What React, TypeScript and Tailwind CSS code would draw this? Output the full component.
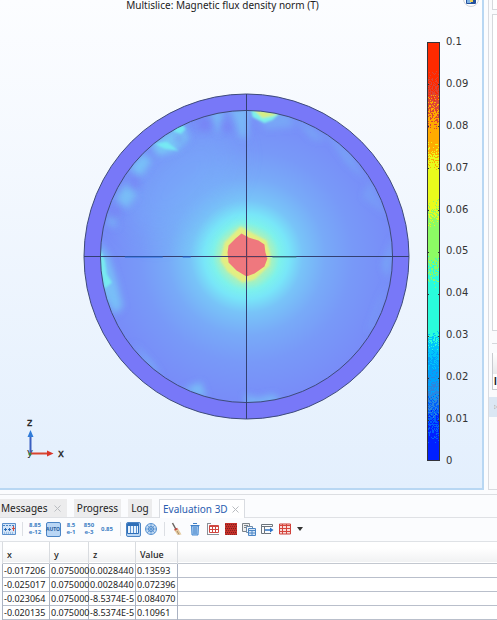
import React from 'react';
import clsx from 'clsx';

const LABELS = ['0.1', '0.09', '0.08', '0.07', '0.06', '0.05', '0.04', '0.03', '0.02', '0.01', '0'];

const ROWS = [
  ['-0.017206', '0.075000', '0.0028440', '0.13593'],
  ['-0.025017', '0.075000', '0.0028440', '0.072396'],
  ['-0.023064', '0.075000', '-8.5374E-5', '0.084070'],
  ['-0.020135', '0.075000', '-8.5374E-5', '0.10961'],
];

// each band dithers into the colour above it between y0 and y1
const BANDS = [
  { y0: 0, y1: 0, color: '#ff2a00' },
  { y0: 26, y1: 62, color: '#dd4534' },
  { y0: 50, y1: 92, color: '#ffab00' },
  { y0: 98, y1: 128, color: '#e9fb1c' },
  { y0: 156, y1: 188, color: '#8cfb64' },
  { y0: 212, y1: 246, color: '#29fcdb' },
  { y0: 286, y1: 308, color: '#00c4fb' },
  { y0: 304, y1: 330, color: '#00a2fb' },
  { y0: 326, y1: 362, color: '#2a86e0' },
  { y0: 350, y1: 376, color: '#0060fb' },
  { y0: 366, y1: 402, color: '#0020ff' },
];

const noise = (x: number, y: number) => {
  const n = Math.sin(x * 12.9898 + y * 78.233) * 43758.5453;
  return n - Math.floor(n);
};

const dither = (y0: number, y1: number) => {
  let d = '';
  for (let y = y0; y < y1; y++) {
    for (let x = 1; x < 12; x++) {
      if (noise(x, y) < (y - y0) / (y1 - y0)) d += `M${x} ${y}h1v1h-1z`;
    }
  }
  return d;
};

const ColorBar = () => {
  return (
    <svg className="my-[5px] h-[419px] w-[13px]" viewBox="0 0 13 419" shapeRendering="crispEdges">
      {BANDS.map(({ y0, y1, color }) => (
        <g key={color} fill={color}>
          <rect x="0" y={y1} width="13" height={419 - y1} />
          <path d={dither(y0, y1)} />
        </g>
      ))}
      <rect x="0.5" y="0.5" width="12" height="418" fill="none" stroke="#33333a" />
      {LABELS.slice(1, -1).map((label, i) => (
        <path key={label} d={`M0 ${(i + 1) * 42}.5h2M11 ${(i + 1) * 42}.5h2`} stroke="#33333a" />
      ))}
    </svg>
  );
};

const FluxDisc = () => {
  return (
    <svg className="mt-[81px] w-full" viewBox="-164 -164 328 328">
      <defs>
        <radialGradient id="field" gradientUnits="userSpaceOnUse" cx="0" cy="0" r="152" fx="0" fy="0">
          <stop offset="0" stopColor="#9cf3cf" />
          <stop offset="0.17" stopColor="#97f2cf" />
          <stop offset="0.22" stopColor="#7df2ec" />
          <stop offset="0.28" stopColor="#78e6f8" />
          <stop offset="0.37" stopColor="#78c4f8" />
          <stop offset="0.52" stopColor="#78aaf8" />
          <stop offset="0.7" stopColor="#7899f8" />
          <stop offset="1" stopColor="#788af8" />
        </radialGradient>
        <clipPath id="inner"><circle r="146.5" /></clipPath>
        <filter id="soft" x="-50%" y="-50%" width="200%" height="200%"><feGaussianBlur stdDeviation="4" /></filter>
        <filter id="wide" x="-50%" y="-50%" width="200%" height="200%"><feGaussianBlur stdDeviation="14" /></filter>
        <filter id="fine" x="-30%" y="-30%" width="160%" height="160%"><feGaussianBlur stdDeviation="1.2" /></filter>
      </defs>
      <circle r="163" fill="#7878f8" />
      <g clipPath="url(#inner)">
        <circle r="147" fill="url(#field)" />
        <ellipse cx="-66" cy="-76" rx="65" ry="38" transform="rotate(-45 -66 -76)" fill="#78b2fa" opacity="0.4" filter="url(#wide)" />
        <g fill="#79d4f6" filter="url(#soft)">
          <path d="M-96-112L-64-136L-58-118L-70-107L-88-101Z" opacity=".8" />
          <path d="M-118-88L-104-104L-95-96L-106-80Z" opacity=".7" />
          <path d="M-132-58L-120-74L-110-62L-120-48Z" opacity=".65" />
          <path d="M-142-35L-132-44L-130-28Z" opacity=".5" />
          <path d="M-38-146L-22-148L-28-122Z" opacity=".6" />
          <path d="M-18-150L4-150L0-118L-6-120Z" opacity=".6" />
          <path d="M2-150L42-146L48-130L20-128Z" opacity=".35" />
          <path d="M44-142L66-130L80-116L66-118Z" opacity=".3" />
          <path d="M74-132L104-104L120-76L100-94Z" opacity=".3" />
          <path d="M124-78L142-40L134-46L116-60Z" opacity=".2" />
          <path d="M-148-16L-138 0L-130 26L-124 50L-132 58L-150 30Z" opacity=".7" />
          <path d="M-114 86L-94 108L-84 124L-100 108Z" opacity=".6" />
          <path d="M-64 134L-46 126L-40 142Z" opacity=".7" />
          <path d="M-2 138L10 142L28 138L36 148L0 150Z" opacity=".6" />
          <path d="M148-22L142 24L136 8Z" opacity=".35" />
          <path d="M144 20L128 70L120 78L132 44Z" opacity=".2" />
        </g>
        <g fill="#7880f4" filter="url(#soft)" opacity=".7">
          <circle cx="-68" cy="-118" r="4" />
          <circle cx="-112" cy="-74" r="5" />
          <circle cx="-132" cy="-44" r="5" />
          <circle cx="-42" cy="-132" r="7" />
          <circle cx="-20" cy="-130" r="5" />
        </g>
        <g filter="url(#fine)">
          <path d="M-92-113L-80-115L-68-106L-82-108ZM-66-134L-61-128L-66-123L-74-126Z" fill="#76eef2" opacity=".85" />
          <path d="M-147-8L-142 4L-140 18L-135 26L-142 32L-148 10Z" fill="#78eaf0" />
          <path d="M4-150L34-144L26-137L18-134L6-140Z" fill="#7df0ea" />
          <path d="M6-148L32-143L26-141L16-139Z" fill="#d6ec84" />
        </g>
        <path d="M-6-32L4-27L20-20L27-8L26 12L10 27L-8 28L-24 14L-30 2L-25-16Z" fill="#a9f0bd" filter="url(#soft)" />
        <path d="M-6-30L3-25L20-16L24-2L23 9L8 23L-4 26L-19 15L-26 4L-22-14Z" fill="#e4ee82" filter="url(#fine)" />
        <path d="M-5-23L2-19L12-16L18-12L19-4L21 2L18 10L8 17L0 20L-10 14L-18 6L-19-4L-18-11L-11-18Z" fill="#ef787e" />
      </g>
      <g fill="none" stroke="#3d4a78">
        <circle r="163" />
        <circle r="146.5" />
        <path d="M.5-163V163M-163 0.5H163" strokeWidth="1" stroke="#333f72" shapeRendering="crispEdges" />
        <path d="M-18 .5H20M.5-20V20" stroke="#b9352c" strokeDasharray="1 1" />
        <path d="M-122 .5H-84M-64 .5H-56" stroke="#2468d8" />
        <path d="M26 .5H50" stroke="#377f86" />
      </g>
    </svg>
  );
};

const AxisTriad = () => {
  return (
    <svg className="mb-[26px] ml-[24px] h-[46px] w-[46px] shrink-0" viewBox="0 0 46 46" fontFamily="DejaVu Sans, sans-serif" fontSize="10" fill="#222">
      <text x="3" y="10" stroke="#222" strokeWidth=".3">z</text>
      <text x="3" y="40">y</text>
      <path d="M6.5 18V37" stroke="#3a5fc0" strokeWidth="2" />
      <path d="M6.500 14L9.500 21H3.500Z" fill="#2f7bd8" />
      <path d="M6 37.500H24" stroke="#d8452f" strokeWidth="2" />
      <path d="M29.500 37.500L23 34.500V40.500Z" fill="#d8352a" />
      <circle cx="6" cy="38" r="1.500" fill="#368a3c" />
      <text x="34" y="41" stroke="#222" strokeWidth=".3">x</text>
    </svg>
  );
};

const Tool = ({ label, active, children }: { label: string; active?: boolean; children: React.ReactNode }) => {
  return (
    <button aria-label={label} className="flex h-[18px] w-[18px] shrink-0 items-center justify-center">
      <span className={clsx('flex h-[15px] w-[15px] items-center justify-center', active && 'rounded-xs border border-[#4b84c4] bg-[#b9d6f5]')}>
        {children}
      </span>
    </button>
  );
};

const NumberFormat = ({ lines }: { lines: string[] }) => {
  return (
    <span className="text-[6px] leading-[7px] font-bold whitespace-nowrap text-[#3d7fc4]">
      {lines.map((line) => <span key={line} className="block">{line}</span>)}
    </span>
  );
};

const Glyph = ({ children }: { children: React.ReactNode }) => {
  return <svg className="h-[14px] w-[14px] shrink-0" viewBox="0 0 14 14" fill="none">{children}</svg>;
};

const Separator = () => <div className="mx-[3px] h-[14px] w-[2px] shrink-0 border-r border-[#dcdfe4]" />;

const Toolbar = () => {
  return (
    <div className="flex h-[24px] items-center border-b border-[#dfe2e6] pb-px">
      <Tool label="Full precision">
        <Glyph>
          <path d="M.5 1.500H13.500V12.500H.5Z" fill="#d3e4f7" stroke="#5b8fcb" />
          <path d="M1 3.500H13" stroke="#4683c6" strokeDasharray="2 1" />
          <path d="M3.500 6V9M7.500 6V9M2 7.500H5M6 7.500H9" stroke="#2869b5" />
          <path d="M11.500 4V9M10 6.500H13" stroke="#d24a3e" />
          <path d="M2 11H12" stroke="#5f95cf" strokeDasharray="1 1" />
        </Glyph>
      </Tool>
      <Separator />
      <Tool label="Full notation"><NumberFormat lines={['8.85', 'e-12']} /></Tool>
      <Tool label="Automatic notation" active>
        <span className="text-[5px] leading-[6px] font-bold text-[#285c9c]">AUTO</span>
      </Tool>
      <Tool label="Scientific notation"><NumberFormat lines={['8.5', 'e-1']} /></Tool>
      <Tool label="Engineering notation"><NumberFormat lines={['850', 'e-3']} /></Tool>
      <Tool label="Decimal notation"><NumberFormat lines={['0.85']} /></Tool>
      <Separator />
      <Tool label="Table" active>
        <Glyph>
          <path d="M1.500 1.500H12.500V11.500H1.500Z" fill="#e9f3fd" stroke="#2f6fb8" />
          <path d="M1 3H13" stroke="#2f6fb8" strokeWidth="2" />
          <path d="M4.500 4V11M7.500 4V11M10.500 4V11" stroke="#5d94d2" />
        </Glyph>
      </Tool>
      <Tool label="Polar">
        <Glyph>
          <circle cx="7" cy="7" r="5.500" fill="#c5dcf4" stroke="#5b94d2" />
          <circle cx="7" cy="7" r="2.500" stroke="#4480c4" />
          <path d="M7 1V13M1 7H13M3 3L11 11M11 3L3 11" stroke="#5b94d2" strokeWidth=".8" />
        </Glyph>
      </Tool>
      <Separator />
      <Tool label="Clear table">
        <Glyph>
          <path d="M2.500 1L6 7.500" stroke="#6a6460" strokeWidth="1.500" />
          <path d="M4.500 8.500L8 6.500L11.500 12.500L7.500 13Z" fill="#e4cba0" />
          <path d="M4.500 8L7.500 6.500" stroke="#c54740" strokeWidth="1.500" />
          <path d="M7 9L9 12.500" stroke="#a98a6a" />
        </Glyph>
      </Tool>
      <Tool label="Delete table">
        <Glyph>
          <path d="M3.500 4H10.500L10 13H4Z" fill="#a6cbf1" stroke="#4a8ad0" />
          <path d="M2.500 3.500H11.500M5 1.500H9M6 5V12M8 5V12" stroke="#3f7fc6" />
        </Glyph>
      </Tool>
      <Tool label="Table graph">
        <Glyph>
          <path d="M1.500 1V13M1 12.500H13" stroke="#8a9098" />
          <path d="M3.500 3.500H12.500V10.500H3.500Z" fill="#fff" stroke="#cf4640" />
          <path d="M3 4.500H13M3 7.500H13M6.500 4V11M9.500 4V11" stroke="#cf4640" />
          <path d="M1 1.500H5" stroke="#8a9098" />
        </Glyph>
      </Tool>
      <Tool label="Table surface">
        <Glyph>
          <path d="M1 1H13V13H1Z" fill="#c62f29" />
          <path d="M1 2.500H13M1 6.500H13M1 10.500H13" stroke="#7a2220" strokeDasharray="1 1" />
          <path d="M2 4.500H13M2 8.500H13M2 12.500H13" stroke="#8a2622" strokeDasharray="1 1" />
        </Glyph>
      </Tool>
      <Tool label="Copy table">
        <Glyph>
          <path d="M.5 1.500H7.500V9.500H.5Z" fill="#eee" stroke="#7b8288" />
          <path d="M2 3.500H6M2 5.500H6" stroke="#7b8288" />
          <path d="M4.500 4.500H10.500V10.500H4.500Z" fill="#f4f8fc" stroke="#6f8aa8" />
          <path d="M6.500 6.500H13.500V13.500H6.500Z" fill="#d7e7f8" stroke="#4a85c5" />
          <path d="M7 8.500H13M7 11H13M10 8V13" stroke="#4a85c5" />
        </Glyph>
      </Tool>
      <Tool label="Export">
        <Glyph>
          <path d="M1.500 2.500H12.500V4.500H1.500ZM1.500 4.500H4.500V11.500H1.500ZM4.500 11.500H11" stroke="#6c747c" />
          <path d="M5 8H11" stroke="#2b74c8" strokeWidth="1.500" />
          <path d="M10 5.500L13.500 8L10 10.500Z" fill="#2b74c8" />
        </Glyph>
      </Tool>
      <Tool label="Table settings">
        <Glyph>
          <path d="M1.500 2H12.500V12H1.500Z" fill="#f8dcd9" stroke="#cf403a" />
          <path d="M1 3.500H13M4.500 2V12M8.500 2V12M1 6.500H13M1 9.500H13" stroke="#d5443c" />
        </Glyph>
      </Tool>
      <button aria-label="More" className="ml-[3px] flex h-[18px] w-[6px] items-center">
        <svg className="h-[4px] w-[6px]" viewBox="0 0 6 4"><path d="M0 0H6L3 4Z" fill="#333" /></svg>
      </button>
    </div>
  );
};

const Cross = () => (
  <svg className="h-[7px] w-[7px] shrink-0" viewBox="0 0 7 7"><path d="M.5 .5L6.500 6.500M6.500 .5L.5 6.500" stroke="#b9bcc0" /></svg>
);

const Tabs = () => {
  return (
    <div role="tablist" className="flex h-[19px] items-stretch gap-[7px] border-b border-[#dfe1e5] text-[10px] leading-[18px]">
      <button role="tab" className="flex w-[67px] items-center gap-[7px] bg-[#ececed] pl-px">Messages<Cross /></button>
      <button role="tab" className="w-[47px] bg-[#ececed]">Progress</button>
      <button role="tab" className="w-[24px] bg-[#ececed]">Log</button>
      <button role="tab" aria-selected className="-mb-px flex w-[86px] items-center gap-[4px] border border-b-0 border-[#d9dce1] bg-white pl-[3px] text-[#2a5db0]">
        <span className="whitespace-nowrap">Evaluation 3D</span><Cross />
      </button>
    </div>
  );
};

const ResultTable = () => {
  return (
    <table className="ml-[2px] w-full table-fixed border-collapse text-left text-[9px] leading-[13px] text-[#222]">
      <colgroup>
        <col className="w-[47px]" />
        <col className="w-[39px]" />
        <col className="w-[47px]" />
        <col className="w-[42px]" />
        <col />
      </colgroup>
      <thead>
        <tr className="h-[21px] border-b border-[#c3c8d0] bg-linear-to-b from-white from-30% to-[#f1f2f3]">
          {['x', 'y', 'z', 'Value', ''].map((name) => (
            <th key={name} className="border-l border-[#d9dce0] p-0 pt-[4px] pl-[4px] font-medium">{name}</th>
          ))}
        </tr>
      </thead>
      <tbody>
        {ROWS.map((row) => (
          <tr key={row[0]} className="h-[14px] border-b border-[#b9bfcb] bg-white">
            {row.map((value, i) => (
              <td key={i} className="border-l border-[#aab2c2] p-0 pl-px whitespace-nowrap">{value}</td>
            ))}
            <td className="border-l border-[#aab2c2] p-0" />
          </tr>
        ))}
      </tbody>
    </table>
  );
};

const Graphics = () => {
  return (
    <section className="relative min-w-0 flex-1 overflow-hidden border-r-2 border-b-2 border-[#b8d7f3] bg-linear-to-b from-[#fcfdff] to-[#e3effd]">
      <h2 className="h-[12px] pr-[37px] text-center text-[10px] leading-[10px] text-[#222]">
        Multislice: Magnetic flux density norm (T)
      </h2>
      <button aria-label="Logo" className="absolute -top-[9px] right-[3px] flex h-[16px] w-[16px] items-center justify-center rounded-full border border-[#cdd2d8] bg-white">
        <svg className="h-[10px] w-[10px]" viewBox="0 0 10 10">
          <rect width="10" height="10" rx="1" fill="#24509c" />
          <path d="M1 3H5V9H1Z" fill="#83b5e4" />
          <path d="M4 3H7V8H4Z" fill="#f0d45c" />
        </svg>
      </button>
      <div className="flex h-[476px]">
        <div className="flex w-[83px] shrink-0 items-end"><AxisTriad /></div>
        <div className="min-w-0 flex-1"><FluxDisc /></div>
        <div className="mt-[25px] ml-[17px] flex h-[429px] w-[55px] shrink-0 gap-[6px]">
          <ColorBar />
          <ul className="flex flex-col justify-between font-['DejaVu_Sans',sans-serif] text-[10px] leading-[10px] text-[#333]">
            {LABELS.map((label) => <li key={label}>{label}</li>)}
          </ul>
        </div>
      </div>
    </section>
  );
};

const SettingsEdge = () => {
  return (
    <aside className="ml-[4px] flex w-[9px] flex-col overflow-hidden border-b border-l border-[#d9dbe0] bg-[#fafbfd]">
      <div className="ml-[3px] h-[10px] border-b border-l border-[#d5d8dc] bg-white" />
      <div className="mt-[4px] ml-[3px] h-[317px] border border-r-0 border-[#d5d8dc] bg-white" />
      <div className="mt-[12px] ml-[3px] border-t border-[#d5d8dc]" />
      <div className="mt-[9px] ml-[3px] h-[21px] border-l border-[#c8cbd0] bg-linear-to-b from-white to-[#e8e9eb]" />
      <div className="ml-[3px] h-[16px] border-b border-l border-[#c8cbd0] bg-white pl-px font-['Liberation_Sans',sans-serif] text-[10px] leading-[15px] font-bold">I</div>
      <div className="mt-[7px] flex h-[20px] items-center bg-[#dbe7f4] pl-[5px]">
        <svg className="h-[8px] w-[6px]" viewBox="0 0 6 8"><path d="M.5 .5L5.500 4L.5 7.500Z" fill="#fff" stroke="#999" /></svg>
      </div>
    </aside>
  );
};

export default function App() {
  return (
    <div className="overflow-x-hidden bg-[#fbfcfe] font-['Noto_Sans',sans-serif] text-[#222]">
      <main className="flex">
        <Graphics />
        <SettingsEdge />
      </main>
      <div className="mt-[4px] border-t border-[#dcdee2] pt-[4px]">
        <Tabs />
        <Toolbar />
        <ResultTable />
      </div>
    </div>
  );
}
